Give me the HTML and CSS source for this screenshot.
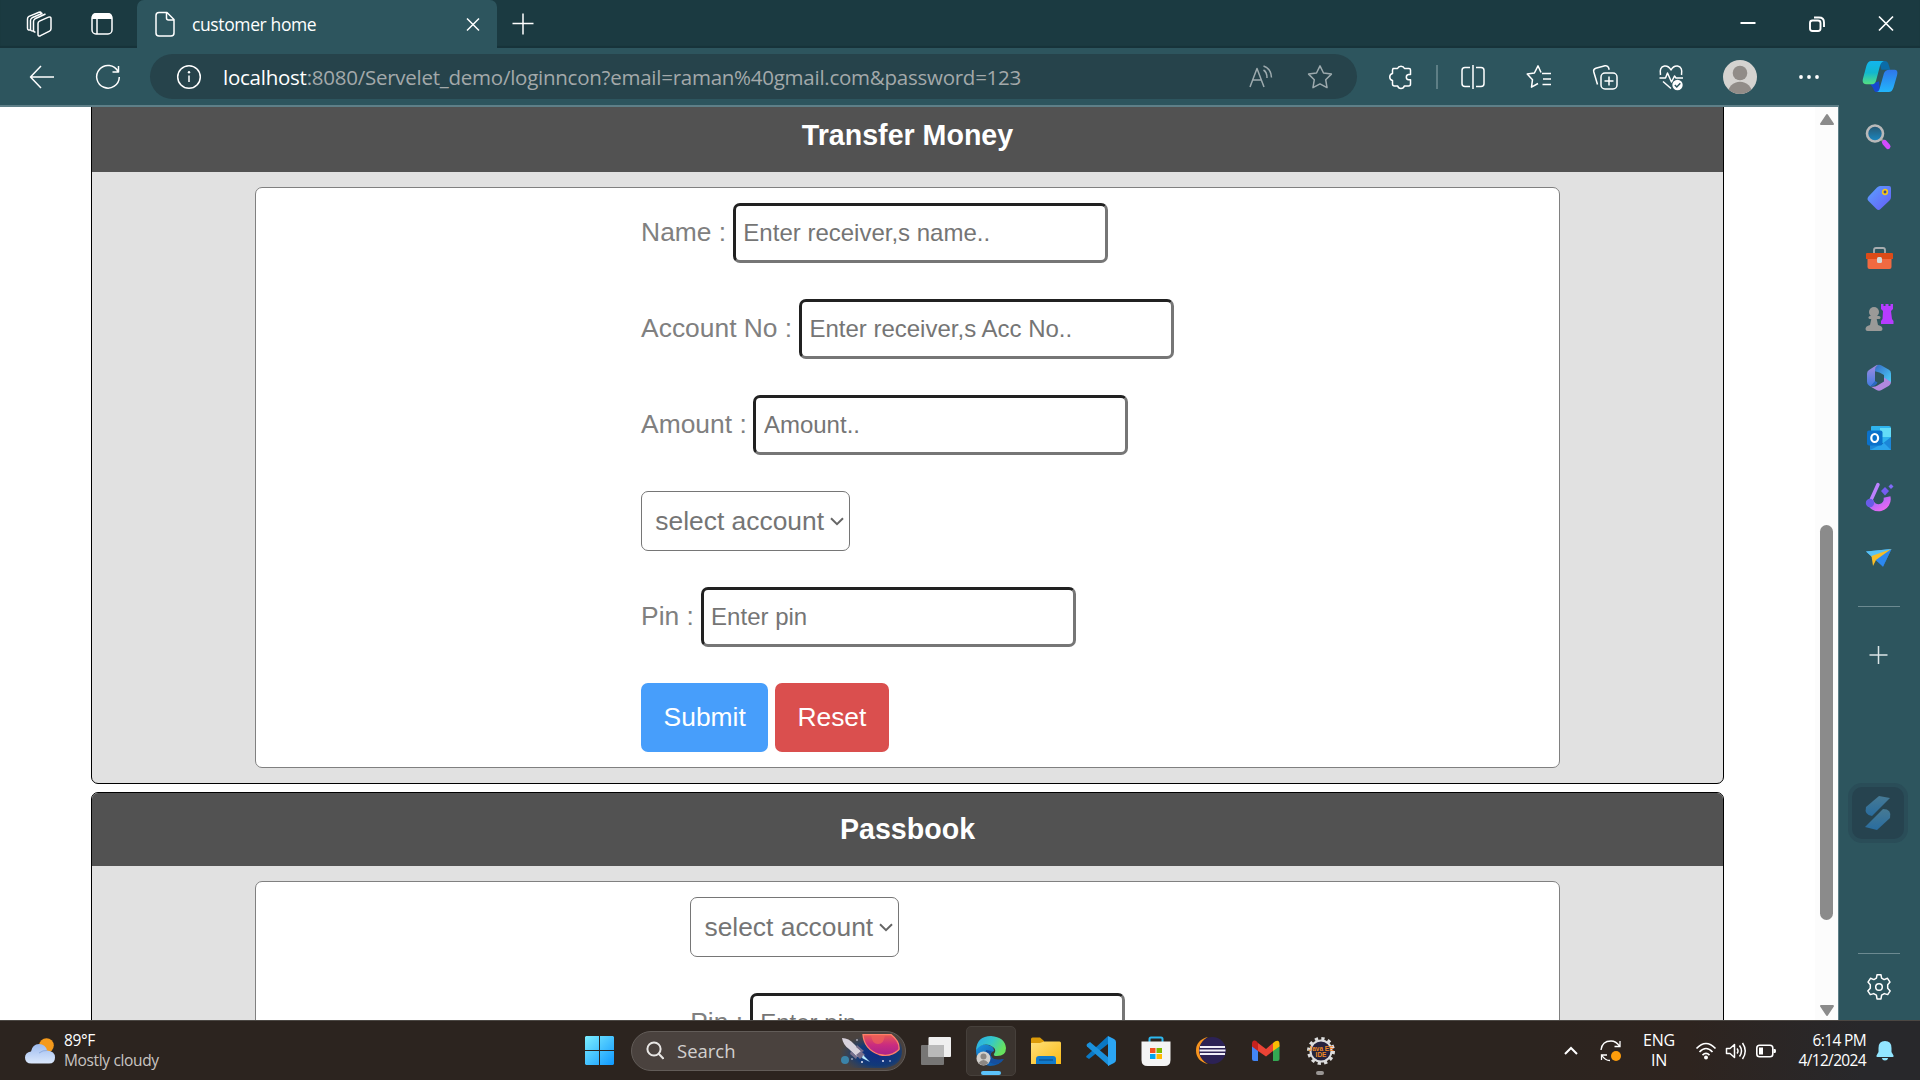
FILE: index.html
```html
<!DOCTYPE html>
<html lang="en">
<head>
<meta charset="utf-8">
<title>customer home</title>
<link rel="stylesheet" href="styles.css">
</head>
<body>
<div class="screen">
  <header class="tabbar">
    <div class="tab-tools">
      <svg class="ico" viewBox="0 0 32 32"><g class="line"><path d="M15 15.500q0-1.700 1.500-2.400l9-4q2.500-.8 2.500 1.600v10q0 1.700-1.500 2.500l-9 4.500q-2.500 1-2.500-1.500z"/><path d="M12.500 24q-2 .2-2-2v-8.500q0-1.800 1.500-2.700l10.500-4.800M7 22q-2.500.5-2.500-2v-9q0-1.800 1.500-2.600L16 4.300q1.700-.6 2.200.7M10.500 23q-3 .5-3-2v-8.500q0-1.800 1.500-2.700l10.500-4.500"/></g></svg>
      <svg class="ico" viewBox="0 0 32 32"><rect class="line" x="6" y="6" width="20" height="20" rx="4"/><path fill="#fff" d="M6 11V9q0-4 4-4h12q4 0 4 4v2z"/><path class="line" d="M11 11v15"/></svg>
    </div>
    <div class="tab">
      <svg class="ico" viewBox="0 0 32 32"><path class="line" d="M10 4.500h8l7 7V25q0 3-3 3H10q-3 0-3-3V7.500q0-3 3-3zM17.500 4.500V10q0 2 2 2H25"/></svg>
      <span class="tab-title">customer home</span>
      <svg class="ico" viewBox="0 0 32 32"><path class="line" d="M10 10.500l12 12M22 10.500l-12 12"/></svg>
    </div>
    <svg class="ico new-tab" viewBox="0 0 32 32"><path class="line" d="M16 5.500v21M5.500 15.500h21"/></svg>
    <div class="window-controls">
      <svg class="ico" viewBox="0 0 32 32"><path stroke="#fff" stroke-width="2" d="M8.500 15h15"/></svg>
      <svg class="ico" viewBox="0 0 32 32"><g fill="none" stroke="#fff" stroke-width="1.900"><rect x="9" y="12.500" width="10.500" height="10.500" rx="2.500"/><path d="M13 9.500h5q5 0 5 5v4.500"/></g></svg>
      <svg class="ico" viewBox="0 0 32 32"><path stroke="#fff" stroke-width="1.700" d="M9 8.500l14 14M23 8.500l-14 14"/></svg>
    </div>
  </header>

  <nav class="toolbar">
    <div class="nav-buttons">
      <svg class="ico" viewBox="0 0 32 32"><path class="line" d="M28 16H5M15 5L4.500 16 15 27"/></svg>
      <svg class="ico" viewBox="0 0 32 32"><path class="line" d="M26 10.500A11.300 11.300 0 1 0 27.300 16M26.500 5v6h-6"/></svg>
    </div>
    <div class="address">
      <svg class="ico" viewBox="0 0 32 32"><circle class="line" cx="16" cy="16" r="11.300"/><path class="line" d="M16 14.500V21"/><circle cx="16" cy="11.300" r="1.200" fill="#fff"/></svg>
      <span class="url"><b>localhost</b>:8080/Servelet_demo/loginncon?email=raman%40gmail.com&amp;password=123</span>
      <svg class="ico dim" viewBox="0 0 32 32"><path class="line" d="M5 26l7-18.500L19 26M7.500 19h9M18.500 9q3.500 2 3.500 8M18.500 5q7.500 2.500 8 11.500"/></svg>
      <svg class="ico dim" viewBox="0 0 32 32"><path class="line" d="M16 4.800l3.500 7.200 7.900 1.100-5.700 5.600 1.300 7.900-7-3.700-7 3.700 1.300-7.900-5.700-5.600 7.900-1.100z"/></svg>
    </div>
    <div class="tool-cell"><svg class="ico" viewBox="0 0 32 32"><path class="line" d="M8 7.500h4.500a3.700 3.200 0 0 1 7 0H24q1.500 0 1.500 1.500v4.500h-2a2.700 2.700 0 0 0 0 5.300h2V23q0 2-2 2h-4.200a3.400 3.200 0 0 1-6.600 0H9.500q-2 0-2-2v-3.500a3.600 3.600 0 0 1 0-7V9q0-1.500 1.500-1.500z"/></svg></div>
    <div class="tool-sep"></div>
    <div class="tool-cell"><svg class="ico" viewBox="0 0 32 32"><path class="line" d="M13 6.500H8Q5 6.500 5 9.500v13q0 3 3 3h5M19 6.500h5q3 0 3 3v13q0 3-3 3h-5M16 4v24"/></svg></div>
    <div class="tool-cell"><svg class="ico" viewBox="0 0 32 32"><path class="line" d="M19 12.500h9M20 18h8M19.500 23.500H28M15 22.500l-6.500 3.600 1-7.400L4.200 13l7.200-1L15 4.800l3 6.700"/></svg></div>
    <div class="tool-cell"><svg class="ico" viewBox="0 0 32 32"><rect class="line" x="12" y="12" width="16" height="16" rx="4"/><path class="line" d="M20 15.500v9M15.500 20h9M8.500 23.500L4.800 11q-.8-3 2-3.800l9.200-2.400q2.800-.6 3.600 2l.6 2"/></svg></div>
    <div class="tool-cell"><svg class="ico" viewBox="0 0 32 32"><path class="line" d="M5.500 14q-1.500-8 4-9Q13.500 4.500 16 9q2.500-4.500 6.500-4 5.500 1 4 9M4.500 17h6l2-5 4 9 3-6 1.500 2H28M8 20.500l8 7"/><circle cx="22.500" cy="24" r="5.200" fill="#fff"/><path d="M19.800 24l2 2 3.500-3.700" fill="none" stroke="#2d555e" stroke-width="1.500"/></svg></div>
    <div class="tool-cell avatar-cell"><svg class="avatar" viewBox="0 0 34 34"><defs><clipPath id="av"><circle cx="17" cy="17" r="17"/></clipPath></defs><g clip-path="url(#av)"><rect width="34" height="34" fill="#d5d3d0"/><circle cx="17" cy="13" r="7.300" fill="#918c88"/><circle cx="17" cy="34" r="12.300" fill="#918c88"/></g></svg></div>
    <div class="tool-cell"><svg class="ico" viewBox="0 0 32 32"><g fill="#fff"><circle cx="8" cy="16" r="1.900"/><circle cx="16" cy="16" r="1.900"/><circle cx="24" cy="16" r="1.900"/></g></svg></div>
    <div class="tool-cell copilot-cell"><svg class="copilot" viewBox="0 0 36 34"><defs><linearGradient id="c1" x1="0" y1="0" x2="0" y2="1"><stop offset="0" stop-color="#12b5ef"/><stop offset=".5" stop-color="#12b7cf"/><stop offset="1" stop-color="#55df80"/></linearGradient><linearGradient id="c2" x1="0" y1="0" x2="0" y2="1"><stop offset="0" stop-color="#2f75ea"/><stop offset="1" stop-color="#22b6fb"/></linearGradient></defs><path fill="#0b6ca7" d="M17 1h6q3 0 4 4l1.500 5h-9z"/><path fill="#1647cf" d="M8 25l9-3 1 11h-3q-3 0-4-4z"/><path fill="url(#c1)" d="M9 1h13q-3 1-4 5l-4 15q-1 4-5 4H4q-5 0-3.500-6L4 6q1.500-5 5-5z"/><path fill="url(#c2)" d="M28 10h5q4 0 2.500 6L32 28q-1.500 5-5 5H14q3 0 4-5l4-14q1-4 6-4z"/></svg></div>
  </nav>

  <div class="browser-body">
    <main class="page">
      <section class="card card-scrolled">
        <h2 class="card-title">Transfer Money</h2>
        <div class="panel">
          <form class="form">
            <label class="row">Name : <input class="field" type="text" placeholder="Enter receiver,s name.."></label>
            <label class="row">Account No : <input class="field" type="text" placeholder="Enter receiver,s Acc No.."></label>
            <label class="row">Amount : <input class="field" type="text" placeholder="Amount.."></label>
            <div class="row"><div class="picker"><select class="select"><option>select account</option></select><svg class="chev" viewBox="0 0 14 9"><path d="M1 1.200l6 6 6-6"/></svg></div></div>
            <label class="row">Pin : <input class="field" type="text" placeholder="Enter pin"></label>
            <div class="row buttons"><button class="btn submit" type="button">Submit</button><button class="btn reset" type="button">Reset</button></div>
          </form>
        </div>
      </section>
      <section class="card">
        <h2 class="card-title">Passbook</h2>
        <div class="panel">
          <form class="form">
            <div class="row"><div class="picker"><select class="select"><option>select account</option></select><svg class="chev" viewBox="0 0 14 9"><path d="M1 1.200l6 6 6-6"/></svg></div></div>
            <label class="row">Pin : <input class="field" type="text" placeholder="Enter pin"></label>
          </form>
        </div>
      </section>
    </main>
    <div class="scrollbar">
      <svg class="arrow" viewBox="0 0 14 11"><path d="M7 1l6 9H1z" fill="#8b8b8b" stroke="#8b8b8b" stroke-width="2" stroke-linejoin="round"/></svg>
      <div class="track"><div class="thumb"></div></div>
      <svg class="arrow" viewBox="0 0 14 11"><path d="M7 10l6-9H1z" fill="#8b8b8b" stroke="#8b8b8b" stroke-width="2" stroke-linejoin="round"/></svg>
    </div>
    <aside class="sidebar">
      <div class="side-cell"><svg class="ico" viewBox="0 0 32 32"><defs><linearGradient id="mg" x1="0" y1="0" x2="0" y2="1"><stop offset="0" stop-color="#29566e"/><stop offset="1" stop-color="#1989c4"/></linearGradient></defs><path stroke="#888" stroke-width="2.500" d="M17 17l4 4"/><path stroke="#d24bff" stroke-width="5" stroke-linecap="round" d="M21.500 21.500l3.500 4"/><circle cx="12" cy="12.500" r="8" fill="url(#mg)" stroke="#b9b9b9" stroke-width="2.600"/></svg></div>
      <div class="side-cell"><svg class="ico" viewBox="0 0 32 32"><defs><linearGradient id="tg" x1="0" y1="0" x2="1" y2="1"><stop offset="0" stop-color="#5aa2ff"/><stop offset="1" stop-color="#665bf7"/></linearGradient></defs><path fill="url(#tg)" d="M17 5h9q2 0 2 2v9q0 2-1.500 3.500L17.500 28q-2 2-4 0l-8-8q-2-2 0-4.500L14 6.500Q15.500 5 17 5z"/><circle cx="22" cy="11" r="2.300" fill="#444a8b" stroke="#f3c51b" stroke-width="1.700"/></svg></div>
      <div class="side-cell"><svg class="ico" viewBox="0 0 32 32"><path fill="none" stroke="#a8adb0" stroke-width="1.800" d="M11 12V9q0-2 2-2h7q2 0 2 2v3"/><path fill="#f16a41" d="M4.500 17h24v9q0 2-2 2h-20q-2 0-2-2z"/><path fill="#dc4b18" d="M4 12h25q1 0 1 1v5H3v-5q0-1 1-1z"/><rect x="14" y="16" width="5" height="6" rx="1.500" fill="#d3d8d8"/></svg></div>
      <div class="side-cell"><svg class="ico" viewBox="0 1 32 32"><path fill="#b63cff" d="M18 4h2.500v2h2V4h3v2h2V4H30v5l-2 2 1 8 1.500 2v3H18v-3l1.500-2 .5-8-2-2z"/><g fill="#9a9a98"><circle cx="11" cy="12" r="5"/><rect x="5.500" y="16" width="12" height="3" rx="1.500"/><path d="M8.500 18h5l1.500 7q4.500 1 4.500 4 0 2-2 2h-13q-2 0-2-2 0-3 4.500-4z"/></g></svg></div>
      <div class="side-cell"><svg class="ico" viewBox="0 -1 32 32"><defs><linearGradient id="m1" x1="0" y1="0" x2="0" y2="1"><stop offset="0" stop-color="#a58be0"/><stop offset="1" stop-color="#3f7be0"/></linearGradient><linearGradient id="m2" x1="0" y1="0" x2="1" y2="1"><stop offset="0" stop-color="#3568c4"/><stop offset="1" stop-color="#4cd0f8"/></linearGradient></defs><path fill="url(#m2)" d="M13.500 3.500q2.500-1.300 5 0l7.500 4.300q2 1.300 2 3.800v9l-7-4.300V13l-4.500-2.500L11 9z"/><path fill="url(#m1)" d="M15 2.800q-3 2-3 5V20l-4.500 4.500-1.500-1q-2-1.300-2-3.800v-8q0-2.500 2-3.800L13 3.400z"/><path fill="#b188df" d="M7.500 24.500q4 1 7-1l6.500-4v-4l7 4.500q0 2.500-2 3.800l-7.500 4.300q-2.500 1.300-5 0z"/><path fill="#2b69c5" d="M12 19l2.500 1.500q-2 4-7 4z"/></svg></div>
      <div class="side-cell"><svg class="ico" viewBox="0 -1 32 32"><path fill="#2fb4ee" d="M9 4h17q2 0 2 2v15H8V5q0-1 1-1z"/><path fill="#63dcf8" d="M17 6h11v9H17z"/><path fill="#1b86d8" d="M7 17l12 5 9-7v13H7z"/><path fill="#2ba4ec" d="M7 28l14-7 7 7z"/><rect x="4" y="8.500" width="15.500" height="15" rx="2" fill="#0a71cb"/><ellipse cx="11.700" cy="16" rx="3.400" ry="4" fill="none" stroke="#fff" stroke-width="2.200"/></svg></div>
      <div class="side-cell"><svg class="ico" viewBox="0 0 32 32"><defs><linearGradient id="dg" x1="0" y1="0" x2="1" y2="1"><stop offset="0" stop-color="#8d68ff"/><stop offset="1" stop-color="#ea68f0"/></linearGradient></defs><path fill="none" stroke="url(#dg)" stroke-width="7" d="M7 20a8.500 8.500 0 1 0 17-4"/><path stroke="#bc81ff" stroke-width="3.500" stroke-linecap="round" d="M15 3.500L8 19"/><circle cx="7" cy="22" r="4.200" fill="#695be8"/><path fill="#755cf2" d="M22 6l4 4-4 4.500L18 10z"/><path fill="#806af8" d="M28 3l2.500 2.500L28 8l-2.500-2.500z"/></svg></div>
      <div class="side-cell"><svg class="ico" viewBox="0 -2 32 32"><path fill="#39a3f4" d="M3 8.500L28.500 6 20 23.500z"/><path fill="#59c2f4" d="M3 8.500L28.500 6 9 14z"/><path fill="#f7bd27" d="M8.500 13L28.500 6 13 17l-3 6z"/><path fill="#257aed" d="M20 24L13 17 28.500 6z" opacity=".65"/></svg></div>
      <div class="side-line"></div>
      <svg class="ico side-add" viewBox="0 0 32 32"><path stroke="#dce5e7" stroke-width="1.500" d="M15.500 7v18M6.500 16h18"/></svg>
      <div class="side-app"><svg viewBox="0 0 32 36"><defs><linearGradient id="sg" x1="0" y1="0" x2="0" y2="1"><stop offset="0" stop-color="#477a94"/><stop offset="1" stop-color="#286c9f"/></linearGradient></defs><g fill="url(#sg)"><path d="M17 1l11 2-18 18q-8-1-6-9z"/><path d="M21 14q9 0 7 9L15 35 3 32z"/></g></svg></div>
      <div class="side-line low"></div>
      <svg class="ico side-gear" viewBox="0 0 32 32"><g class="line"><path d="M13.400 7.200l.6-3.400h4l.6 3.400 2.500 1.400 3.400-1.300 2.500 3.800-2.300 2.600v3.600l2.500 2.600-2.500 3.700-3.400-1-2.700 1.500-.6 3.800h-4l-.6-3.800-2.700-1.500-3.400 1-2.500-3.700 2.500-2.600v-3.600L5 11.100l2.500-3.800 3.400 1.300z"/><circle cx="16" cy="16" r="3.300"/></g></svg>
    </aside>
  </div>

  <footer class="taskbar">
    <div class="weather">
      <svg viewBox="0 0 30 26"><defs><linearGradient id="wg" x1="0" y1="0" x2="0" y2="1"><stop offset="0" stop-color="#9dbbef"/><stop offset="1" stop-color="#dbe8fc"/></linearGradient></defs><circle cx="21.500" cy="7.500" r="7.300" fill="#f59a1c"/><path fill="url(#wg)" d="M6.500 25.500q-6.500 0-6.500-6 0-5 6-6Q7.500 6 14 6q6.500 0 8 6.500 8 .5 8 7 0 6-6 6z"/><path d="M14 15q4-3 8-2.500" stroke="#8facdf" fill="none"/></svg>
      <div class="weather-text"><span class="temp">89°F</span><span class="sky">Mostly cloudy</span></div>
    </div>
    <div class="dock">
      <svg class="start" viewBox="0 0 29 29"><defs><linearGradient id="win" gradientUnits="userSpaceOnUse" x1="0" y1="0" x2="29" y2="29"><stop offset="0" stop-color="#7ceeff"/><stop offset="1" stop-color="#0f98ff"/></linearGradient></defs><path fill="url(#win)" d="M1 0h13v14H0V1zM15 0h13l1 1v13H15zM0 15h14v14H1l-1-1zM15 15h14v13l-1 1H15z"/></svg>
      <div class="search">
        <svg class="glass" viewBox="0 0 18 19"><circle cx="8" cy="8" r="6.600"/><path d="M12.700 12.700l4.800 5"/></svg>
        <span class="search-text">Search</span>
        <svg class="art" viewBox="0 0 64 34"><defs><radialGradient id="sky" cx=".62" cy=".6" r=".6"><stop offset="0" stop-color="#102b86"/><stop offset=".55" stop-color="#123a78"/><stop offset="1" stop-color="#2c4567" stop-opacity="0"/></radialGradient><linearGradient id="pl" x1="0" y1="0" x2="0" y2="1"><stop offset="0" stop-color="#e75a50"/><stop offset=".5" stop-color="#ca2c80"/><stop offset="1" stop-color="#a7238b"/></linearGradient></defs><path fill="url(#sky)" d="M0 0h50q14 3 14 17T48 34H0z"/><path fill="url(#pl)" stroke="#ff8069" stroke-width="1.300" d="M25 .5h28q9 7 8 15-8 8-20 5Q26 15 25 .5z"/><path fill="#ef6358" opacity=".7" d="M33 1h14q-1 9-7 9t-7-9z"/><circle cx="7" cy="26" r="4" fill="#3b83a8"/><path fill="#d8d2dc" d="M4 4q7 0 12 6l8 8-5 5-8-8Q5 11 4 4z"/><path fill="#776f8c" d="M13 17l6 6-1 2-6-5zM19 11l7 6-2 1-6-5zM23 17l4 4-5 4-4-4z"/><path fill="#b9edff" d="M25 21l7 7-8-4z"/><g fill="#e8e6f5"><circle cx="19" cy="6" r=".8"/><circle cx="14" cy="25" r=".8"/><circle cx="24" cy="28" r="1"/><circle cx="45" cy="27" r="1"/><circle cx="52" cy="27" r=".8"/></g></svg>
      </div>
      <div class="dock-cell"><svg viewBox="0 0 30 30"><rect y="9" width="23" height="20" rx="1" fill="#777675"/><rect x="7.500" y="1" width="22.500" height="20" rx="1" fill="#efefef"/><path d="M7.500 9H23v12H7.500z" fill="#b9b9b9"/></svg></div>
      <div class="dock-cell"><div class="active-tile"></div><svg viewBox="0 0 30 30"><defs><linearGradient id="e1" x1="0" y1="0" x2="1" y2=".4"><stop offset="0" stop-color="#29a9e8"/><stop offset=".55" stop-color="#35c8c9"/><stop offset="1" stop-color="#67e25e"/></linearGradient><linearGradient id="e2" x1="0" y1="0" x2="1" y2="1"><stop offset="0" stop-color="#1b93df"/><stop offset="1" stop-color="#0c4b9c"/></linearGradient></defs><path fill="url(#e2)" d="M1 12Q6 7 12 9q6 1 6 6-4 1-3 5 3 6 13 3-5 7-14 7Q0 28 0 14z"/><path fill="#154f9e" d="M10 14q-3 10 5 13t12-4q-10 2-12-3-1-3 1-5z"/><path fill="url(#e1)" d="M0 14Q1 0 15 0q14 1 15 12 0 8-9 8-4 0-3-2 3-4-1-7Q8 5 0 14z"/><circle cx="7.500" cy="22.500" r="7" fill="#d1cfcc"/><circle cx="7.500" cy="20.500" r="3" fill="#8c8783"/><path d="M2.500 27q5-6 10 0-5 4.500-10 0z" fill="#8c8783"/></svg><div class="run on"></div></div>
      <div class="dock-cell"><svg viewBox="0 0 30 30"><defs><linearGradient id="fo" x1="0" y1="0" x2="1" y2="1"><stop offset="0" stop-color="#ffe07a"/><stop offset="1" stop-color="#fbbb16"/></linearGradient></defs><path fill="#dc9b09" d="M0 3q0-1.500 1.500-1.500H9L13 5v6H0z"/><path fill="url(#fo)" d="M0 7h9l4-1.500h15.500Q30 5.500 30 7v21H0z"/><path fill="#117bcc" d="M5 28v-5q0-3 3-3h14q3 0 3 3v5z"/><path stroke="#0b5292" stroke-width="1.300" d="M8 24h14"/></svg></div>
      <div class="dock-cell"><svg viewBox="0 0 30 30"><path fill="#0a78c4" d="M0 21l3 2L22 8V0L1 19.500Q0 20.500 0 21z"/><path fill="#1b91dc" d="M1 8l3-2 19 16v8L1 10.500Q0 9 1 8z"/><path fill="#2ba5f3" d="M22 0l6 3q2 1 2 3v18q0 2-2 3l-6 3z"/></svg></div>
      <div class="dock-cell"><svg viewBox="0 0 30 30"><path fill="none" stroke="#2cb8ef" stroke-width="2" d="M8.500 7V3q0-1.500 1.500-1.500h10q1.500 0 1.500 1.500v4"/><path fill="#f4f4f4" d="M.5 5.500h29V24q0 6-6 6h-17q-6 0-6-6z"/><path fill="#f25022" d="M9 12h5.500v5H9z"/><path fill="#7fba00" d="M15.500 12H21v5h-5.500z"/><path fill="#00a4ef" d="M9 18h5.500v5H9z"/><path fill="#ffb900" d="M15.500 18H21v5h-5.500z"/></svg></div>
      <div class="dock-cell"><svg viewBox="0 0 30 30"><path fill="#f7941e" d="M12 1Q0 4 0 14.500T12 28Q4 24 4 14.500T12 1z"/><circle cx="16.500" cy="14.500" r="13.500" fill="#2c2255"/><g fill="#f1eff8"><path d="M4 10h25v2H4zM3.500 13.500h26v2h-26zM4 17h25v2H4z"/></g></svg></div>
      <div class="dock-cell"><svg viewBox="0 0 30 30"><path fill="#4285f4" d="M1 9l6 4.500V25H3q-2 0-2-2z"/><path fill="#34a853" d="M22 13.500L28.500 9v14q0 2-2 2H22z"/><path fill="#fbbc04" d="M22 7q3-3 5.500-2 1 1 1 3v2.500L22 15z"/><path fill="#ea4335" d="M7 7l8 6 7-6v8l-7 5.500L7 15z"/><path fill="#c5221f" d="M1 8q0-4 3-3.500 1.500.3 3 2.500v8l-6-4.500z"/></svg></div>
      <div class="dock-cell"><svg viewBox="0 0 30 30"><circle cx="15" cy="15" r="12.500" fill="none" stroke="#dedede" stroke-width="3" stroke-dasharray="3.270 3.270"/><circle cx="15" cy="15" r="10.500" fill="#26233d" stroke="#dcdcdc" stroke-width="2"/><text class="jee" x="15" y="14.500">Java EE</text><text class="jee" x="15" y="20.500">IDE</text></svg><div class="run"></div></div>
    </div>
    <div class="tray">
      <svg class="up" viewBox="0 0 14 9"><path d="M1 8l6-6 6 6"/></svg>
      <svg class="sync" viewBox="0 0 22 22"><g fill="none" stroke="#fff" stroke-width="1.300"><path d="M1 10Q2 1 11 1q5 0 8.500 5M20 1v5.500h-5.500M1.500 20v-5H7M2 15.500q3 5 8 5"/></g><circle cx="16" cy="16" r="5" fill="#ff9d0b"/></svg>
      <div class="lang"><span>ENG</span><span>IN</span></div>
      <div class="status">
        <svg viewBox="0 0 22 20"><g fill="none" stroke="#fff" stroke-width="1.700"><path d="M1.500 7.500q9.500-10 19 0M4.500 11q6.500-7 13 0M7.500 14.200q3.500-3.500 7 0"/></g><circle cx="11" cy="16.500" r="2" fill="#fff"/></svg>
        <svg viewBox="0 0 22 20"><g fill="none" stroke="#fff" stroke-width="1.500" stroke-linejoin="round"><path d="M1.500 7.500H5L9.500 3.500v13L5 12.500H1.500zM12 7.500q2 2.500 0 5M14.500 4.500q4 5.500 0 11M17.500 2q5.500 8 0 16"/></g></svg>
        <svg viewBox="0 0 22 20"><rect x="1.800" y="4.300" width="16" height="11.500" rx="2.800" fill="none" stroke="#fff" stroke-width="1.600"/><path fill="#fff" d="M4 6.500h4v7H4zM18.500 8h1.500q1 0 1 2t-1 2h-1.500z"/></svg>
      </div>
      <div class="clock"><span>6:14 PM</span><span>4/12/2024</span></div>
      <svg class="bell" viewBox="0 0 18 20"><path fill="#92e5ff" d="M9 0q6.500 0 6.500 7v4l2 3.500q.5 1.500-1 1.500h-15Q0 16 .5 14.500l2-3.500V7Q2.500 0 9 0zM5.800 17h6.400q-.7 2.500-3.200 2.500T5.800 17z"/></svg>
    </div>
  </footer>
</div>
</body>
</html>
```
FILE: styles.css
```css
* { box-sizing: border-box; }

body {
  margin: 0;
  font-family: "Liberation Sans", Arial, sans-serif;
  background: #fff;
}

svg { display: block; flex: none; }

.screen {
  width: 1920px;
  height: 1080px;
  display: flex;
  flex-direction: column;
  overflow: hidden;
}

.ico { width: 32px; height: 32px; }
.line { fill: none; stroke: #fff; stroke-width: 1.5; stroke-linejoin: round; }
.dim { opacity: .55; }

/* Title bar */
.tabbar {
  flex: none;
  height: 48px;
  display: flex;
  align-items: center;
  background: #1b3a41;
  box-shadow: inset 0 -2px 1px #17333a;
}
.tab-tools {
  width: 137px;
  display: flex;
  gap: 31px;
  padding-left: 23px;
}
.tab {
  width: 360px;
  height: 48px;
  display: flex;
  align-items: center;
  padding: 0 8px 0 12px;
  border-radius: 7px 7px 0 0;
  background: #2d555e;
}
.tab-title {
  flex: 1;
  padding: 0 0 1px 11px;
  font-family: "Open Sans", sans-serif;
  font-size: 17.5px;
  letter-spacing: -.38px;
  color: #fff;
}
.new-tab { margin-left: 10px; }
.window-controls {
  display: flex;
  gap: 37px;
  margin-left: auto;
  padding-right: 18px;
}

/* Address toolbar */
.toolbar {
  flex: none;
  height: 57px;
  display: flex;
  align-items: center;
  background: #2d555e;
}
.nav-buttons {
  width: 150px;
  display: flex;
  gap: 34px;
  padding-left: 26px;
}
.address {
  width: 1207px;
  height: 45px;
  display: flex;
  align-items: center;
  padding: 0 21px 0 23px;
  border-radius: 23px;
  background: #26434b;
}
.url {
  flex: 1;
  padding-left: 18px;
  white-space: nowrap;
  font-family: "Open Sans", sans-serif;
  font-size: 20.5px;
  letter-spacing: -.25px;
  color: #a3a9aa;
}
.url b { font-weight: 400; color: #fff; }
.address .dim + .dim { margin-left: 27px; }
.tool-cell {
  width: 66px;
  display: flex;
  justify-content: center;
}
.address + .tool-cell { margin-left: 11px; }
.tool-sep { width: 2px; height: 24px; margin: 0 0 0 2px; background: #5e7f86; }
.tool-sep + .tool-cell { margin-left: 2px; }
.avatar-cell { width: 72px; }
.avatar { width: 34px; height: 34px; }
.copilot-cell { width: 75px; }
.copilot { width: 36px; height: 33px; }

/* Viewport */
.browser-body {
  flex: none;
  height: 915px;
  display: flex;
  background: #2d555e;
}
.page {
  width: 1815px;
  border-top: 2px solid #5e7f88;
  background: #fff;
  overflow: hidden;
}
.card {
  width: 1633px;
  margin: 0 auto 8px 91px;
  padding-bottom: 15px;
  border: 1px solid #000;
  border-radius: 7px;
  background: #e1e1e1;
  overflow: hidden;
}
.card-scrolled { margin-top: -9px; }
.card-title {
  height: 73px;
  margin: 0 0 15px;
  text-align: center;
  font-size: 28.6px;
  line-height: 72px;
  color: #fff;
  background: #525252;
}
.panel {
  width: 1305px;
  margin: 0 auto;
  padding: 15px 0;
  border: 1px solid #808080;
  border-radius: 7px;
  background: #fff;
}
.form {
  width: fit-content;
  margin: 0 auto;
  display: flex;
  flex-direction: column;
  gap: 36px;
}
.row {
  display: flex;
  align-items: baseline;
  gap: 6.7px;
  height: 60px;
  font-size: 26.4px;
  color: #808080;
}
.field {
  width: 375px;
  height: 60px;
  padding: 0 7.5px;
  border: 3px solid;
  border-color: #212121 #767676 #767676 #212121;
  border-radius: 7px;
  background: #fff;
  font: 24px "Liberation Sans", Arial, sans-serif;
}
.field::placeholder { color: #757575; opacity: 1; }
.picker { position: relative; }
.select {
  appearance: none;
  display: block;
  width: 209px;
  height: 60px;
  padding: 0 0 0 13.2px;
  border: 1px solid #767676;
  border-radius: 7px;
  background: #fff;
  color: #757575;
  font: 26.4px "Liberation Sans", Arial, sans-serif;
}
.chev {
  position: absolute;
  right: 6px;
  top: 26px;
  width: 14px;
  height: 9px;
  fill: none;
  stroke: #666;
  stroke-width: 2;
}
.buttons { height: 69px; }
.btn {
  height: 69px;
  padding: 0 22.5px 1px;
  border: 0;
  border-radius: 7px;
  font: 26.4px "Liberation Sans", Arial, sans-serif;
  color: #fff;
}
.submit { background: #479efb; }
.reset { background: #da4f4e; }

/* Scrollbar */
.scrollbar {
  width: 23px;
  display: flex;
  flex-direction: column;
  align-items: center;
  padding: 7px 0 4px;
  border-top: 2px solid #5e7f88;
  background: #fcfcfc;
}
.arrow { width: 14px; height: 11px; overflow: visible; }
.track { flex: 1; padding-top: 400px; }
.thumb { width: 13px; height: 395px; border-radius: 7px; background: #8b8b8b; }

/* Edge sidebar */
.sidebar {
  width: 82px;
  display: flex;
  flex-direction: column;
  align-items: center;
  padding: 2px 1px 0 0;
  border-left: 1px solid #5e7f88;
}
.side-cell {
  flex: none;
  height: 60px;
  display: flex;
  align-items: center;
}
.side-line { flex: none; width: 42px; height: 1px; margin-top: 19px; background: #6c8a91; }
.side-add { margin-top: 32px; }
.side-app {
  flex: none;
  width: 60px;
  height: 60px;
  margin: 112px 2px 0 0;
  padding: 8px 10px;
  border: 4px solid #2a4d58;
  border-radius: 14px;
  background: #26434f;
}
.side-app svg { width: 32px; height: 36px; }
.side-line.low { margin-top: 110px; }
.side-gear { margin-top: 17px; }

/* Taskbar */
.taskbar {
  flex: none;
  height: 60px;
  display: flex;
  border-top: 1px solid #4b4743;
  background: linear-gradient(90deg, #2c241f 0, #2c241f 80%, #2e241f 88%, #28282b 97%);
  font-family: "Open Sans", sans-serif;
  color: #fff;
}
.weather {
  width: 585px;
  display: flex;
  align-items: center;
  gap: 9px;
  padding-left: 25px;
}
.weather svg { width: 30px; height: 26px; }
.weather-text, .lang, .clock {
  display: flex;
  flex-direction: column;
  font-size: 15.5px;
  line-height: 20px;
}
.weather-text { padding-bottom: 2px; letter-spacing: -.35px; }
.sky { color: #c9c5c2; }
.dock { width: 979px; display: flex; align-items: center; }
.start { width: 29px; height: 29px; }
.search {
  width: 275px;
  height: 40px;
  display: flex;
  align-items: center;
  margin: 0 2px 0 17px;
  padding: 0 3px 0 14px;
  border: 1px solid #625c58;
  border-radius: 20px;
  background: #4a423e;
}
.glass { width: 18px; height: 19px; fill: none; stroke: #e8e6e4; stroke-width: 2; }
.search-text { flex: 1; padding-left: 13px; font-size: 18.5px; color: #d3d0ce; }
.art { width: 64px; height: 34px; }
.dock-cell {
  position: relative;
  width: 55px;
  height: 50px;
  display: flex;
  align-items: center;
  justify-content: center;
}
.dock-cell svg { position: relative; width: 30px; height: 30px; }
.active-tile {
  position: absolute;
  inset: 0 2px 0 3px;
  border: 1px solid #46403b;
  border-radius: 5px;
  background: #3b342f;
}
.run {
  position: absolute;
  bottom: 1px;
  left: 23px;
  width: 8px;
  height: 4px;
  border-radius: 2px;
  background: #9a9694;
}
.run.on { left: 18px; width: 20px; background: #5cc3fb; }
.jee { font: bold 6.5px "Liberation Sans", sans-serif; fill: #f08a24; text-anchor: middle; }
.tray { display: flex; align-items: center; }
.up { width: 14px; height: 9px; fill: none; stroke: #fff; stroke-width: 2; }
.sync { width: 22px; height: 22px; margin-left: 22px; }
.lang { width: 46px; margin-left: 14px; padding-bottom: 1px; align-items: center; font-size: 16px; letter-spacing: -.2px; }
.status { display: flex; gap: 8px; margin-left: 13px; }
.status svg { width: 22px; height: 20px; }
.clock { width: 89px; padding-bottom: 1px; align-items: flex-end; white-space: nowrap; font-size: 15.5px; letter-spacing: -.65px; }
.bell { width: 18px; height: 20px; margin-left: 10px; }
```
